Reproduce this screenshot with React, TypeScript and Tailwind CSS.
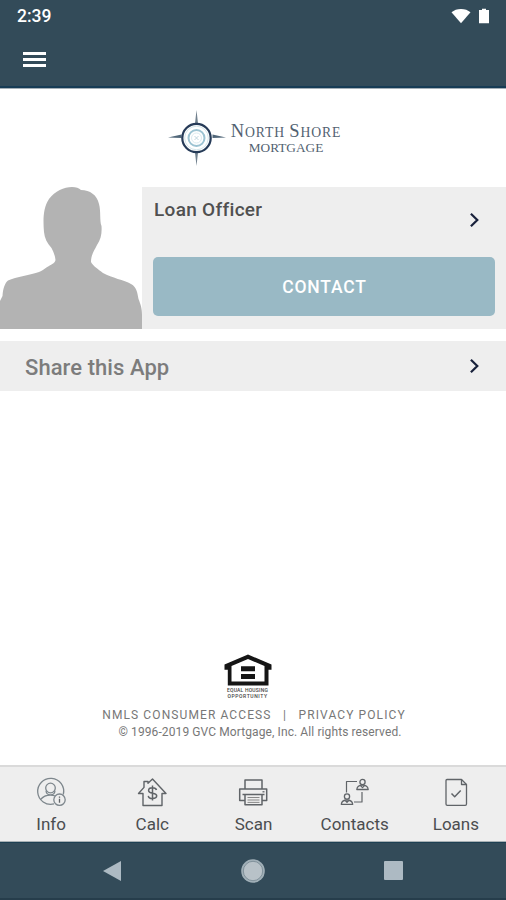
import type { ReactNode } from "react";

const tabs: { label: string; icon: ReactNode }[] = [
  { label: "Info", icon: <InfoIcon /> },
  { label: "Calc", icon: <CalcIcon /> },
  { label: "Scan", icon: <ScanIcon /> },
  { label: "Contacts", icon: <ContactsIcon /> },
  { label: "Loans", icon: <LoansIcon /> },
];

function TabIcon({ children }: { children: ReactNode }) {
  return (
    <svg
      className="h-8 w-8"
      viewBox="0 0 32 32"
      fill="none"
      stroke="#606468"
      strokeWidth={1.3}
      strokeLinejoin="round"
    >
      {children}
    </svg>
  );
}

function InfoIcon() {
  return (
    <TabIcon>
      <g stroke="#7d868c">
        <path d="M19 27.9A13 13 0 1 1 28.3 18.5" />
        <circle cx="15.5" cy="12" r="4.8" />
        <path d="M11 14.8c.5 5.500 8.500 5.500 9 0M5.500 23.500c2.500-3 6-4.500 10-4.500 1.700 0 3 .2 4.200.7" />
        <circle cx="24.500" cy="23.700" r="5.700" />
      </g>
      <path d="M24.500 22.700v4M24.500 20.500v1.200" />
    </TabIcon>
  );
}

function CalcIcon() {
  return (
    <TabIcon>
      <path d="M7 17.500v12h19v-12h4L16.500 3l-4.500 4.300V5.500H8v5.900L2.500 17.500z" strokeWidth={1.4} />
      <path
        d="M20.500 14c-.4-1.600-1.900-2.300-4-2.300-2.300 0-3.900 1-3.900 2.700 0 3.800 8.100 1.700 8.100 5.400 0 1.700-1.700 2.700-4.200 2.700-2.300 0-4-.9-4.200-2.700M16.500 9.500v15"
        strokeWidth={1.5}
      />
    </TabIcon>
  );
}

function ScanIcon() {
  return (
    <TabIcon>
      <path d="M8 12.500V4h17v8.500M8 24.500H2.700V13h27v11.500H25" strokeWidth={1.5} />
      <path d="M8 18.500h17v10.300H8zM5.500 18.500h22" strokeWidth={1.5} />
      <path d="M25.500 15.800h2" />
      <path d="M10.500 21.500h12M10.500 24h12M10.500 26.400h12" stroke="#888" strokeWidth={1} />
    </TabIcon>
  );
}

function ContactsIcon() {
  return (
    <TabIcon>
      <path d="M7.500 16.500V5.500H18M23 16v10h-8" strokeWidth={1.2} />
      <circle cx="23.500" cy="6" r="2.600" />
      <path d="M17.800 13.500c.3-2.700 2-4.300 5.700-4.300s5.400 1.600 5.700 4.300zM21.500 9.600l2 2 2-2" />
      <circle cx="8" cy="20.500" r="2.600" />
      <path d="M2.300 28.300c.3-2.700 2-4.300 5.700-4.300s5.400 1.600 5.700 4.300zM6 24.300l2 2 2-2" />
    </TabIcon>
  );
}

function LoansIcon() {
  return (
    <TabIcon>
      <path d="M7 3.500h14.500l5 5V28a1.300 1.300 0 0 1-1.300 1.300H7.300A1.300 1.300 0 0 1 6 28V4.500a1 1 0 0 1 1-1z" />
      <path d="M21.500 3.500v5h5" />
      <path d="M11.500 17.500l3.200 3.200 6-6.200" strokeWidth={1.5} />
    </TabIcon>
  );
}

function Chevron() {
  return (
    <svg className="h-4 w-3" viewBox="0 0 12 16" fill="none" stroke="#18213b" strokeWidth={2.2}>
      <path d="M1.900 1.800L8.300 8l-6.400 6.200" />
    </svg>
  );
}

function Header() {
  return (
    <header className="h-[89px] shrink-0 border-b border-[#a5afb7] bg-[#334b59]">
      <div className="flex h-[88px] flex-col border-b-2 border-[#173c55]">
        <div className="flex h-8 items-center justify-between pr-4 pl-[17px] text-white">
          <span className="text-[17.5px] leading-8 font-medium">2:39</span>
          <div className="flex items-center gap-[7px]">
            <svg className="h-4 w-5" viewBox="0 0 20 16" fill="currentColor">
              <path d="M10 15.300L.5 4.200C3 2.100 6.200.9 10 .9s7 1.200 9.500 3.300z" />
            </svg>
            <svg className="h-4 w-3" viewBox="0 0 12 16" fill="currentColor">
              <path d="M4 .8h4v1.200h3v13.300H1V2h3z" />
            </svg>
          </div>
        </div>
        <button className="ml-[23px] flex h-[54px] w-6 flex-col justify-center gap-[3px]">
          <span className="h-[3px] w-[23px] bg-white" />
          <span className="h-[3px] w-[23px] bg-white" />
          <span className="h-[3px] w-[23px] bg-white" />
        </button>
      </div>
    </header>
  );
}

function Logo() {
  return (
    <div className="flex h-[98px] shrink-0 items-center pl-[167px]">
      <svg className="h-[58px] w-[60px]" viewBox="0 0 60 58" fill="none">
        <path d="M29.500 1l1.500 13.500h-3zM29.500 57L31 43.500h-3z" fill="#71818e" />
        <path d="M1 28.500l13.500-3V29zM59 28.500l-13.500-3V29z" fill="#516779" />
        <circle cx="29.500" cy="29" r="14.200" stroke="#263b58" strokeWidth={2.2} />
        <circle cx="29.500" cy="29" r="11.800" stroke="#d4e6ea" />
        <circle cx="29.500" cy="29" r="8" stroke="#9cc3d2" strokeWidth={2} />
        <circle cx="29.500" cy="29" r="5" stroke="#dcebf0" />
        <path d="M27.500 27l4 4M31.500 27l-4 4" stroke="#b3ccd6" strokeWidth={0.8} />
      </svg>
      <div className="ml-[3px] flex w-[112px] flex-col items-center pt-0.5 font-['Liberation_Serif',serif] text-[#526271]">
        <div className="text-[13.7px] leading-4 tracking-[0.9px] whitespace-nowrap">
          <span className="text-[18.5px]">N</span>ORTH <span className="text-[18.5px]">S</span>HORE
        </div>
        <div className="-mt-px text-[13.3px] leading-[15px]">MORTGAGE</div>
      </div>
    </div>
  );
}

function OfficerCard() {
  return (
    <section className="flex h-[142px] shrink-0">
      <svg className="h-[142px] w-[142px] shrink-0" viewBox="0 0 142 142" fill="#b3b3b3">
        <path d="M0 142V114L2.500 109C3 101 5 96 8 93.500C16 90 31 88 39 85C44 83 45 81 49 79C52 77 55 76 55.500 73C55 68 53 64 51.500 61C47 56 44.500 51 44 45C43 33 43 21 49 12C55 4 64 0 72 0C76 0 79 1 81 3C90 3 97 8 99 17C101 24 99.500 34 101.500 39C102 46 101 52 97 58C94 64 91 68 91 75C93 79 98 82 103 86C112 91 124 93 131 97C137 100 137.500 107 138.500 112C140.500 117 142 121 142 128V142z" />
      </svg>
      <div className="flex flex-1 flex-col bg-[#eee] pr-[11px] pl-[11px]">
        <div className="flex h-[70px] justify-between">
          <h2 className="pt-[11px] pl-px text-[19px] leading-6 font-medium tracking-[0.3px] text-[#505050]">
            Loan Officer
          </h2>
          <div className="pt-[25px] pr-[14px]">
            <Chevron />
          </div>
        </div>
        <button className="h-[59px] rounded-[5px] bg-[#99b9c5] pt-0.5 pl-px text-[17.5px] font-medium tracking-[0.8px] text-white">
          CONTACT
        </button>
      </div>
    </section>
  );
}

function Footer() {
  return (
    <footer className="flex flex-col items-center pb-[25px] text-[#777]">
      <div className="-ml-[11px] flex flex-col items-center">
        <svg className="h-8 w-12" viewBox="0 0 48 32" fill="#151515">
          <path
            fillRule="evenodd"
            d="M24 .5L.5 10.500v5.200h3.300V31.500h40.700V15.700h3V10.500zM24 5l16.500 7v15.500h-33V12z"
          />
          <path d="M17 12.200h14v5H17zM17 20h14v5H17z" />
        </svg>
        <div className="mt-0.5 flex h-[13px] flex-col text-center text-[5px] leading-[5.5px] font-medium whitespace-nowrap text-[#444]">
          <span className="tracking-[0.2px]">EQUAL HOUSING</span>
          <span className="tracking-[0.6px]">OPPORTUNITY</span>
        </div>
      </div>
      <div className="mt-[5px] ml-0.5 flex text-xs leading-[18px] tracking-[1.1px] whitespace-pre">
        <span>NMLS CONSUMER ACCESS</span>
        <span className="px-[11.5px]">|</span>
        <span>PRIVACY POLICY</span>
      </div>
      <p className="ml-[14px] text-xs leading-4 tracking-[0.1px]">
        © 1996-2019 GVC Mortgage, Inc. All rights reserved.
      </p>
    </footer>
  );
}

function TabBar() {
  return (
    <nav className="grid h-[77px] shrink-0 grid-cols-5 border-t-2 border-b border-t-[#dadada] border-b-[#a9b1b5] bg-[#eee]">
      {tabs.map((tab) => (
        <button key={tab.label} className="flex flex-col items-center pt-[9px] pl-px">
          {tab.icon}
          <span className="mt-1.5 text-[17px] leading-5 text-[#4b4d50]">{tab.label}</span>
        </button>
      ))}
    </nav>
  );
}

function SystemNav() {
  return (
    <div className="flex h-[58px] shrink-0 items-center justify-between border-t border-b-2 border-t-[#1e4053] border-b-[#263d4b] bg-[#334b59] px-[102px]">
      <svg className="h-6 w-5" viewBox="0 0 20 24" fill="#adbac3">
        <path d="M19 2v20L1 12z" />
      </svg>
      <svg className="h-6 w-6" viewBox="0 0 24 24">
        <circle cx="12" cy="12" r="11.800" fill="#a1b0b8" />
        <circle cx="12" cy="12" r="9.700" fill="#b8c2c8" stroke="#758791" strokeWidth={0.8} />
      </svg>
      <span className="mr-px h-[19px] w-[19px] rounded-[1px] bg-[#adbac3]" />
    </div>
  );
}

export default function App() {
  return (
    <div className="flex h-[900px] w-[506px] flex-col overflow-hidden bg-white font-['Roboto',sans-serif]">
      <Header />
      <main className="flex flex-1 flex-col">
        <Logo />
        <OfficerCard />
        <section className="mt-3 flex h-[50px] items-center justify-between bg-[#eee] pr-[25px] pl-[25px]">
          <h2 className="pt-0.5 text-[22px] font-medium tracking-[0.07px] text-[#7c7c7c]">
            Share this App
          </h2>
          <Chevron />
        </section>
        <div className="flex-1" />
        <Footer />
      </main>
      <TabBar />
      <SystemNav />
    </div>
  );
}
